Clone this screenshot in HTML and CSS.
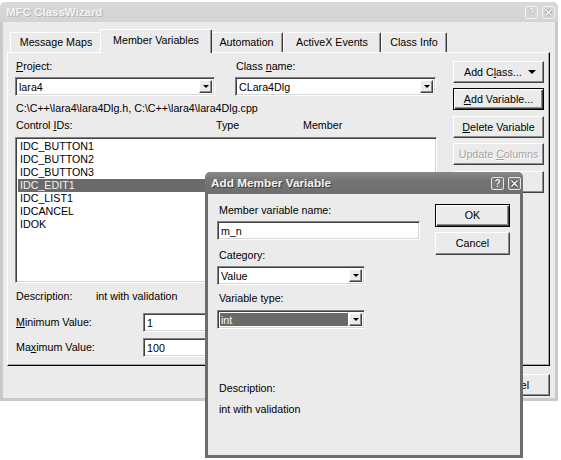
FILE: index.html
```html
<!DOCTYPE html>
<html lang="en">
<head>
  <meta charset="UTF-8">
  <title>MFC ClassWizard</title>
  <link rel="stylesheet" href="styles.css">
</head>
<body>

<!-- ClassWizard main window -->
<div class="wizard">
  <div class="caption">
    <span class="caption-text">MFC ClassWizard</span>
    <span class="caption-btns">
      <span class="cap-btn">?</span>
      <span class="cap-btn">
        <svg width="11" height="11" viewBox="0 0 11 11"><path d="M2.5 2.5 L8.5 8.5 M8.5 2.5 L2.5 8.5" class="x-out"/><path d="M2.5 2.5 L8.5 8.5 M8.5 2.5 L2.5 8.5" class="x-in"/></svg>
      </span>
    </span>
  </div>

  <div class="wizard-body">
    <div class="tabs">
      <div class="tab tab-mm">Message Maps</div>
      <div class="tab tab-mv active">Member Variables</div>
      <div class="tab tab-auto">Automation</div>
      <div class="tab tab-ax">ActiveX Events</div>
      <div class="tab tab-ci">Class Info</div>
    </div>

    <div class="panel">
      <div class="panel-main">
        <div class="pair">
          <div>
            <div class="label"><u>P</u>roject:</div>
            <div class="combo">
              <span class="combo-value">lara4</span>
              <span class="drop"><i class="arrow"></i></span>
            </div>
          </div>
          <div>
            <div class="label">Class <u>n</u>ame:</div>
            <div class="combo">
              <span class="combo-value">CLara4Dlg</span>
              <span class="drop"><i class="arrow"></i></span>
            </div>
          </div>
        </div>

        <div class="path">C:\C++\lara4\lara4Dlg.h, C:\C++\lara4\lara4Dlg.cpp</div>

        <div class="list-head">
          <span class="col-id">Control <u>I</u>Ds:</span>
          <span class="col-type">Type</span>
          <span>Member</span>
        </div>

        <ul class="listbox">
          <li>IDC_BUTTON1</li>
          <li>IDC_BUTTON2</li>
          <li>IDC_BUTTON3</li>
          <li class="selected">IDC_EDIT1</li>
          <li>IDC_LIST1</li>
          <li>IDCANCEL</li>
          <li>IDOK</li>
        </ul>

        <div class="desc-row">
          <span class="desc-label">Description:</span>
          <span>int with validation</span>
        </div>

        <div class="value-row first">
          <span class="value-label"><u>M</u>inimum Value:</span>
          <div class="edit">1</div>
        </div>
        <div class="value-row">
          <span class="value-label">Ma<u>x</u>imum Value:</span>
          <div class="edit">100</div>
        </div>
      </div>

      <div class="panel-side">
        <button class="btn btn-split"><span>Add C<u>l</u>ass...</span> <i class="arrow big"></i></button>
        <button class="btn default"><u>A</u>dd Variable...</button>
        <button class="btn"><u>D</u>elete Variable</button>
        <button class="btn disabled">Update <u>C</u>olumns</button>
        <!-- covered by the dialog -->
        <button class="btn"></button>
      </div>
    </div>

    <div class="footer">
      <button class="btn btn-foot"></button>
      <button class="btn btn-foot">Cancel</button>
    </div>
  </div>
</div>

<!-- Add Member Variable dialog, floating over the wizard -->
<div class="dialog">
  <div class="caption dark">
    <span class="caption-text">Add Member Variable</span>
    <span class="caption-btns">
      <span class="cap-btn">?</span>
      <span class="cap-btn">
        <svg width="11" height="11" viewBox="0 0 11 11"><path d="M2.5 2.5 L8.5 8.5 M8.5 2.5 L2.5 8.5" class="x-out"/><path d="M2.5 2.5 L8.5 8.5 M8.5 2.5 L2.5 8.5" class="x-in"/></svg>
      </span>
    </span>
  </div>

  <div class="dialog-body">
    <div class="dialog-main">
      <div class="label">Member variable name:</div>
      <div class="edit wide">m_n</div>

      <div class="label gap-cat">Category:</div>
      <div class="combo narrow">
        <span class="combo-value">Value</span>
        <span class="drop"><i class="arrow"></i></span>
      </div>

      <div class="label gap-type">Variable type:</div>
      <div class="combo narrow focused">
        <span class="combo-value">int</span>
        <span class="drop"><i class="arrow"></i></span>
      </div>

      <div class="label gap-desc">Description:</div>
      <div class="label gap-text">int with validation</div>
    </div>

    <div class="dialog-side">
      <button class="btn btn-dlg default">OK</button>
      <button class="btn btn-dlg">Cancel</button>
    </div>
  </div>
</div>

</body>
</html>
```

FILE: styles.css
```css
body {
  margin: 0;
  background: #fff;
  font-family: 'Liberation Sans', Arial, sans-serif;
  font-size: 10.7px;
  line-height: 13px;
  color: #000;
}

u {
  text-decoration: underline;
  text-underline-offset: 1px;
}

/* Windows */
.wizard {
  position: absolute;
  left: 0;
  top: 2px;
  width: 558px;
  height: 399px;
  box-sizing: border-box;
  padding: 0 3px 3px;
  background: #c9c9c9;
  border-radius: 6px 6px 0 0;
  display: flex;
  flex-direction: column;
}

.dialog {
  position: absolute;
  left: 205px;
  top: 172px;
  width: 318px;
  height: 286px;
  box-sizing: border-box;
  padding: 0 3px 3px;
  background: #6c6c6c;
  border-radius: 7px 7px 0 0;
  display: flex;
  flex-direction: column;
}

/* Title bars */
.caption {
  height: 20px;
  flex: none;
  display: flex;
  align-items: center;
  justify-content: space-between;
  background: linear-gradient(#d9d9d9, #d3d3d3);
  border-radius: 5px 5px 0 0;
  margin: 0 -3px;
  padding: 0 3px 0 6px;
}

.caption-text {
  font-weight: bold;
  font-size: 11.5px;
  color: #f3f3f3;
  text-shadow: 1px 1px 0 #b4b4b4;
}

.caption-btns {
  display: flex;
  gap: 4px;
}

.cap-btn {
  width: 13px;
  height: 13px;
  box-sizing: border-box;
  border: 1px solid #f2f2f2;
  border-radius: 2px;
  display: flex;
  align-items: center;
  justify-content: center;
  font-weight: bold;
  font-size: 10px;
  color: #f6f6f6;
  text-shadow: 0 0 1px #9a9a9a, 0 0 1px #9a9a9a;
}

.x-out {
  stroke: #a8a8a8;
  stroke-width: 3.2;
  fill: none;
}

.x-in {
  stroke: #f6f6f6;
  stroke-width: 1.6;
  fill: none;
}

.caption.dark {
  height: 22px;
  background: linear-gradient(#878787, #747474 40%, #6f6f6f);
  padding: 0 2px 0 6px;
}

.caption.dark .caption-text {
  font-size: 11.8px;
  color: #f2f2f2;
  text-shadow: 1px 1px 0 #3c3c3c;
}

.caption.dark .cap-btn {
  border-color: #e4e4e4;
  background: #7c7c7c;
  color: #fff;
  text-shadow: 0 0 1px #333, 0 0 1px #333;
}

.caption.dark .x-out {
  stroke: #444;
}

/* Main window body */
.wizard-body {
  flex: 1;
  background: #ebebeb;
  padding: 7px 4px 0;
}

.tabs {
  display: flex;
  align-items: flex-end;
  height: 23px;
  margin-left: 3px;
}

.tab {
  height: 20px;
  box-sizing: border-box;
  line-height: 18px;
  text-align: center;
  border: 1px solid #fff;
  border-bottom: 0;
  border-right-color: #3a3a3a;
  border-radius: 2px 2px 0 0;
  box-shadow: inset -1px 0 #9a9a9a;
  background: #ebebeb;
}

.tab-mm { width: 92px; }
.tab-mv { width: 112px; }
.tab-auto { width: 73px; }
.tab-ax { width: 98px; }
.tab-ci { width: 66px; }

.tab.active {
  height: 24px;
  margin: 0 -2px -1px;
  line-height: 21px;
  position: relative;
  z-index: 1;
}

.panel {
  width: 543px;
  height: 314px;
  box-sizing: border-box;
  border: 1px solid;
  border-color: #fff #000 #000 #fff;
  box-shadow: inset -1px -1px #a2a2a2;
  padding: 7px 0 0 7px;
  display: grid;
  grid-template-columns: 422px 91px;
  column-gap: 16px;
  align-items: start;
}

.pair {
  display: grid;
  grid-template-columns: 200px 201px;
  column-gap: 20px;
}

.label {
  padding-left: 1px;
}

/* Fields */
.combo,
.edit,
.listbox {
  box-sizing: border-box;
  background: #fff;
  border: 1px solid;
  border-color: #828282 #fff #fff #828282;
  box-shadow: inset 1px 1px #404040, inset -1px -1px #d6d6d6;
}

.combo {
  height: 19px;
  margin-top: 4px;
  display: flex;
  padding: 2px;
}

.combo-value {
  flex: 1;
  padding-left: 1px;
  line-height: 15px;
}

.drop {
  width: 13px;
  box-sizing: border-box;
  background: #ebebeb;
  border: 1px solid;
  border-color: #fff #404040 #404040 #fff;
  box-shadow: inset -1px -1px #8c8c8c;
  display: flex;
  align-items: center;
  justify-content: center;
}

.arrow {
  width: 0;
  height: 0;
  border-left: 3px solid transparent;
  border-right: 3px solid transparent;
  border-top: 3px solid #000;
}

.arrow.big {
  border-left-width: 4px;
  border-right-width: 4px;
  border-top-width: 4px;
}

.edit {
  height: 19px;
  padding: 2px 3px;
  line-height: 15px;
}

.path {
  margin-top: 6px;
  padding-left: 1px;
}

.list-head {
  margin-top: 4px;
  display: flex;
  padding-left: 1px;
}

.col-id { width: 200px; }
.col-type { width: 87px; }

.listbox {
  list-style: none;
  margin: 5px 0 0;
  padding: 2px 2px;
  height: 146px;
}

.listbox li {
  padding-left: 2px;
  height: 13px;
}

.listbox li.selected {
  background: #6a6a6a;
  color: #f4f4f4;
}

.desc-row {
  margin-top: 7px;
  padding-left: 1px;
  display: flex;
}

.desc-label { width: 80px; }

.value-row {
  display: flex;
  align-items: center;
  margin-top: 6px;
}

.value-row.first { margin-top: 10px; }

.value-label {
  width: 127px;
  padding-left: 1px;
}

.value-row .edit { width: 150px; }

/* Buttons */
.panel-side {
  display: flex;
  flex-direction: column;
  padding-top: 1px;
}

.btn {
  height: 22px;
  box-sizing: border-box;
  margin: 0;
  padding: 0;
  font: inherit;
  color: #000;
  background: #ebebeb;
  border: 1px solid;
  border-color: #fff #404040 #404040 #fff;
  box-shadow: inset -1px -1px #8c8c8c;
  text-align: center;
}

.panel-side .btn + .btn { margin-top: 5px; }
.panel-side .btn:nth-child(3),
.panel-side .btn:nth-child(5) { margin-top: 6px; }

.btn.default {
  border-color: #000;
  box-shadow: inset 1px 1px #fff, inset -1px -1px #404040, inset -2px -2px #8c8c8c;
}

.btn.disabled {
  color: #a4a4a4;
  text-shadow: 1px 1px 0 #fff;
}

.btn-split {
  display: flex;
  align-items: center;
  justify-content: space-between;
  padding: 0 7px 0 10px;
}

.footer {
  display: flex;
  justify-content: flex-end;
  gap: 6px;
  padding: 8px 1px 0 0;
}

.btn-foot { width: 75px; }

/* Add Member Variable dialog */
.dialog-body {
  flex: 1;
  background: #ebebeb;
  padding: 10px 10px 0 9px;
  display: grid;
  grid-template-columns: 203px 75px;
  column-gap: 15px;
  align-items: start;
}

.dialog-main .label { padding-left: 2px; }

.edit.wide {
  margin-top: 4px;
}

.combo.narrow { width: 148px; }

.gap-cat { margin-top: 9px; }
.gap-type { margin-top: 7px; }
.gap-desc { margin-top: 53px; }
.gap-text { margin-top: 8px; }

.combo.focused { margin-top: 5px; }

.combo.focused .combo-value {
  background: #6a6a6a;
  color: #f4f4f4;
  margin-right: 1px;
}

.dialog-side {
  display: flex;
  flex-direction: column;
  gap: 5px;
}

.btn-dlg { height: 23px; }
```
